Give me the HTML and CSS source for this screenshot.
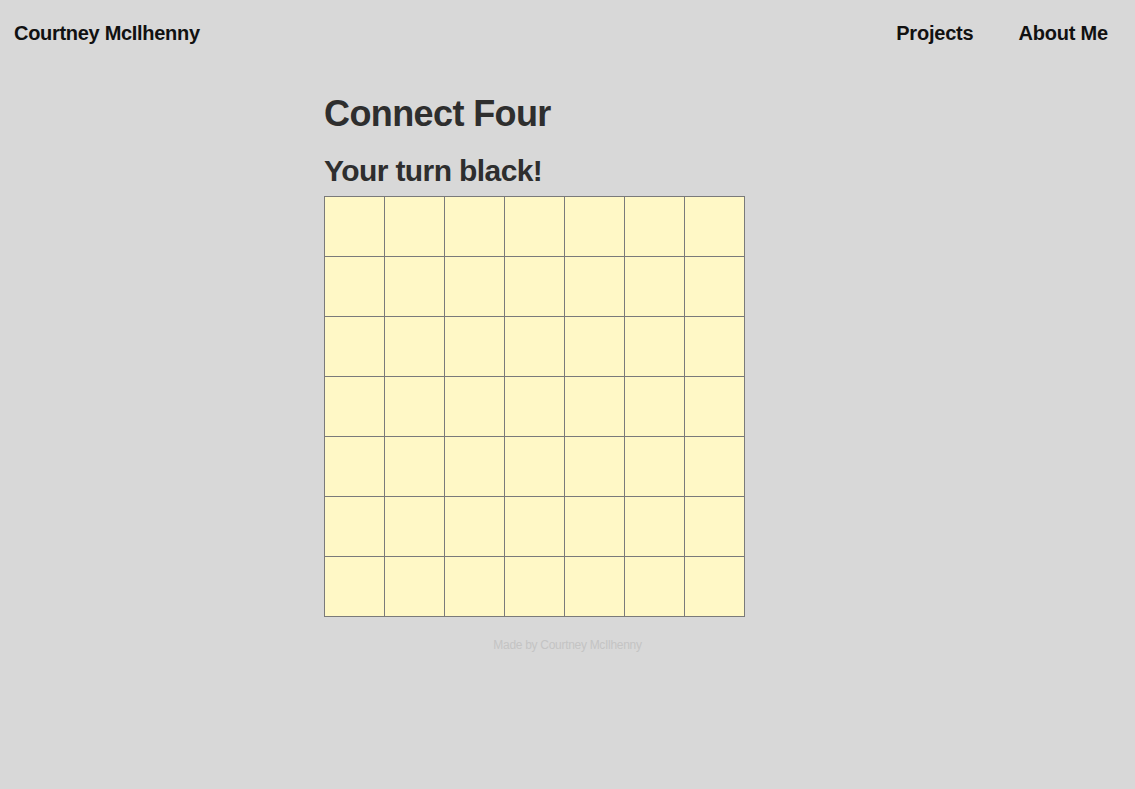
FILE: index.html
```html
<!DOCTYPE html>
<html>
<head>
<meta charset="utf-8">
<title>Connect Four</title>
<link rel="stylesheet" href="styles.css">
</head>
<body>
<header class="site-header">
  <a class="brand" href="#">Courtney McIlhenny</a>
  <nav class="nav">
    <a href="#">Projects</a>
    <a href="#">About Me</a>
  </nav>
</header>
<main class="game">
  <h1 class="title">Connect Four</h1>
  <h2 class="status">Your turn black!</h2>
  <table class="board">
    <tr><td></td><td></td><td></td><td></td><td></td><td></td><td></td></tr>
    <tr><td></td><td></td><td></td><td></td><td></td><td></td><td></td></tr>
    <tr><td></td><td></td><td></td><td></td><td></td><td></td><td></td></tr>
    <tr><td></td><td></td><td></td><td></td><td></td><td></td><td></td></tr>
    <tr><td></td><td></td><td></td><td></td><td></td><td></td><td></td></tr>
    <tr><td></td><td></td><td></td><td></td><td></td><td></td><td></td></tr>
    <tr><td></td><td></td><td></td><td></td><td></td><td></td><td></td></tr>
  </table>
</main>
<footer class="footer">Made by Courtney McIlhenny</footer>
</body>
</html>
```
FILE: styles.css
```css
html, body {
  margin: 0;
  padding: 0;
}
body {
  background: #d8d8d8;
  font-family: "Liberation Sans", Arial, sans-serif;
  color: #333;
}
.site-header {
  display: flex;
  justify-content: space-between;
  align-items: center;
  height: 66px;
  padding: 0 27px 0 14px;
}
.site-header a {
  color: #111;
  text-decoration: none;
  font-size: 20px;
  font-weight: bold;
  letter-spacing: -0.2px;
}
.site-header .brand {
  letter-spacing: -0.3px;
}
.nav {
  display: flex;
  gap: 45px;
}
.game {
  width: 487px;
  margin: 0 auto;
}
.title {
  margin: 25px 0 0;
  font-size: 36px;
  line-height: 46px;
  font-weight: bold;
  letter-spacing: -0.6px;
  color: #2e2e2e;
}
.status {
  margin: 16px 0 0;
  font-size: 30px;
  line-height: 36px;
  font-weight: bold;
  letter-spacing: -0.6px;
  color: #2e2e2e;
}
.board {
  border-collapse: collapse;
  margin-top: 7px;
}
.board td {
  width: 59px;
  height: 59px;
  padding: 0;
  border: 1px solid #7a7a7a;
  background: #fff8c6;
}
.footer {
  text-align: center;
  margin-top: 21px;
  font-size: 12px;
  color: #c4c4c4;
  letter-spacing: -0.3px;
}
```
